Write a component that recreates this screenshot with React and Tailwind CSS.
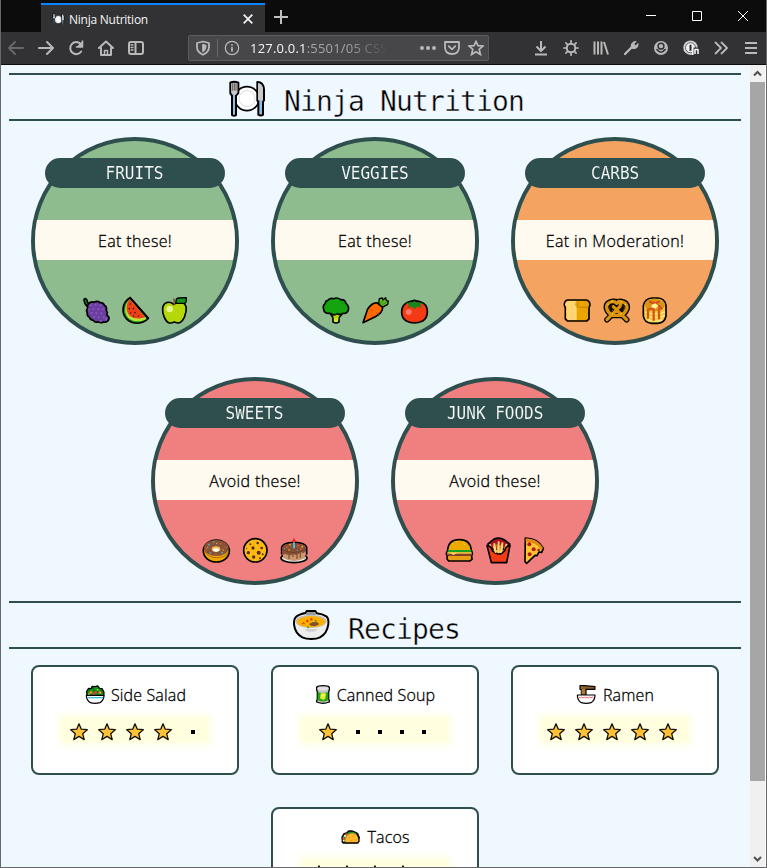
import React from "react";

const ink = { stroke: "#000", strokeWidth: 5, strokeLinejoin: "round", strokeLinecap: "round" };

/* Food drawings: each slot shares one coordinate space, 120 units per column. */
const slots = ["150 495 120 90", "270 495 120 90", "390 495 120 90"];

const dots = (points, fill, r = 2.5) =>
  points.map(([x, y], i) => <circle key={i} cx={x} cy={y} r={r} fill={fill} />);

const food = {
  grapes: (
    <>
      <path {...ink} fill="#16a31a" d="M177 508q6-5 9 3 0 8 8 13l-7 5q-9-7-10-21z" />
      <path {...ink} fill="#6b3fa0" d="M190 522q8-9 17-5 10-6 18 1 10-1 13 8 9 5 6 14 5 8 1 15 8 4 7 12-5 12-17 9-7 5-15-1-10 4-15-4-9 0-12-9-8-4-6-13-5-9 1-14-2-8 2-13z" />
      {dots([[198, 526], [212, 524], [226, 526], [192, 538], [206, 537], [220, 538], [234, 538], [200, 549], [214, 549], [229, 550], [207, 561], [221, 562], [236, 562], [226, 573], [243, 567]], "#8a5abd", 3)}
    </>
  ),
  watermelon: (
    <>
      <path {...ink} fill="#15961a" d="M315 503c-26 15-26 49-9 65 17 16 48 16 64-3z" />
      <path d="M315 508c-19 16-18 43-5 56 14 13 39 13 54 2z" fill="#b9e33c" />
      <path d="M315 508c-15 16-12 37-2 48 11 11 32 12 47 5z" fill="#f03e17" />
      <path {...ink} fill="none" d="M315 503l55 62" />
      {dots([[316, 522], [313, 536], [325, 536], [317, 549], [330, 548], [326, 558], [340, 558]], "#3c1720", 2.4)}
    </>
  ),
  apple: (
    <>
      <path {...ink} fill="#b4d80a" d="M446 523q-9-9-22-5c-15 6-13 29-6 44 8 18 16 20 30 14 15 6 22 3 30-14 8-20 9-39-7-45q-13-4-25 6z" />
      <circle cx="434" cy="537" r="10" fill="#e8f48d" />
      <path stroke="#86562f" strokeWidth="5" d="M449 526q0-12-3-20" />
      <path {...ink} strokeWidth="4" fill="#16961a" d="M453 520q-1-17 8-16l23-1q2 19-9 17z" />
    </>
  ),
  broccoli: (
    <>
      <path {...ink} fill="#b9d80a" d="M197 552l7 11v13q9 5 18 0v-13l9-11z" />
      <path {...ink} fill="#15a310" d="M187 512q8-10 19-6 11-5 21 3 13-1 16 11 10 9 7 20-4 13-17 10-7 6-16 1-10 8-21-1-18 2-20-12-4-11 5-18 0-7 6-8z" />
      <path d="M207 551q15 5 15-6m6-26q9 0 10 5" stroke="#0c8910" strokeWidth="2" fill="none" />
      <path d="M206 561l7 8 8-9-3 16h-10z" fill="#dced27" />
    </>
  ),
  carrot: (
    <>
      <path {...ink} strokeWidth="4" fill="#69bd20" d="M341 522l2-16 9-2 2 6 8-7 2 9 6 1-2 10-12 7-10-1z" />
      <path {...ink} fill="#ff6900" d="M294 578l14-41q15-21 29-18l16 13q0 17-22 28z" />
      <path stroke="#c14f18" strokeWidth="3" d="M316 538l8 7m10 2l7 6m-22 3l6 5" />
      <path stroke="#168b16" strokeWidth="3" d="M345 523l12-13m-5 14l13-8" />
    </>
  ),
  tomato: (
    <>
      <path {...ink} fill="#f33a14" d="M430 516q18-7 38 0c25 8 24 45 5 57q-25 12-49 0c-20-13-19-48 6-57z" />
      <circle cx="431" cy="546" r="9" fill="#ff7765" />
      <path d="M421 519l20-2 3-8 8 0 3 8 20 2-9 5 3 11-11-6-9 9-8-9-11 6 2-11z" fill="#14861b" />
      <path {...ink} strokeWidth="4" fill="none" d="M430 515l12-1 6-4 6 4 12 1" />
    </>
  ),
  bread: (
    <>
      <path {...ink} fill="#eba400" d="M187 510h57q11 3 11 15l-3 8v34l-7 6h-57l-7-6v-34l-3-8q0-12 9-15z" />
      <path d="M188 513h27q-5 5-5 12l5 7v38h-26l-5-5v-34l-4-6q1-10 8-12z" fill="#ffd673" />
      <path stroke="#c67c00" strokeWidth="3" fill="none" d="M216 515q5 4 3 10-2 6-3 8m5-1h30" />
    </>
  ),
  pretzel: (
    <>
      <path fill="none" stroke="#000" strokeWidth="17" strokeLinecap="round" strokeLinejoin="round" d="M306 569l40-39q-2-17-22-16-20 2-20 18 1 14 17 24h28q17-10 18-24-1-16-20-18-20 0-22 15l40 40" />
      <path d="M312 530q2-9 15-9l4 8-13 17q-6-8-6-16zm46 0q-2-9-15-9l-5 8 14 17q6-8 6-16zM335 537l-12 13h24z" fill="#150e00" />
      <path fill="none" stroke="#d9940c" strokeWidth="10" strokeLinecap="round" strokeLinejoin="round" d="M306 569l38-39q8-14-3-16M306 569M335 520q-8-8-18-4-14 5-12 18 2 12 16 22h28q14-10 17-22 1-13-13-18-10-3-18 4M365 569l-40-39" />
      {dots([[309, 523], [321, 515], [349, 515], [361, 523], [322, 552], [348, 552]], "#ffd979", 2)}
    </>
  ),
  pancakes: (
    <>
      <path {...ink} fill="#f6c83b" d="M441 504h18q20 1 24 22v32q-4 21-25 22h-18q-22-2-25-22v-31q5-22 26-23z" />
      <path fill="#dc9217" d="M419 526q3-19 29-20 28 1 32 21-5 15-30 17-27-2-31-18z" />
      <path stroke="#fff08b" strokeWidth="4" fill="none" d="M420 546q28 12 60 0m-58 11q29 12 57 0m-51 12q23 8 44 0" />
      <path stroke="#d55218" strokeWidth="7" strokeLinecap="round" fill="none" d="M429 541v22m17-24v31m16-32v27M435 515q13 9 26 0m-33 25q17-4 28-14 10 2 13 10" />
      <path d="M441 524l10-4 9 7-8 9-13-4z" fill="#fff39b" />
    </>
  ),
  donut: (
    <>
      <ellipse {...ink} cx="214" cy="543" rx="39" ry="33" fill="#f2a600" />
      <ellipse cx="214" cy="534" rx="37" ry="24" fill="#855438" />
      <path d="M179 544q13 20 35 19 26 1 37-18" stroke="#b36d23" strokeWidth="3" fill="none" />
      <ellipse cx="213" cy="537" rx="13" ry="8" fill="#f5bd58" />
      <ellipse cx="213" cy="540" rx="9" ry="5" fill="#fff" />
      {dots([[192, 524], [206, 516], [231, 548], [196, 549]], "#54b9cf")}
      {dots([[227, 521], [184, 538], [241, 532], [213, 553]], "#ef5548")}
      {dots([[215, 520], [188, 532], [234, 540]], "#ffb52e", 2)}
    </>
  ),
  cookie: (
    <>
      <circle {...ink} cx="331" cy="541" r="35" fill="#ffb913" />
      <g fill="#593017">
        <circle cx="324" cy="534" r="5" /><circle cx="310" cy="548" r="5" /><circle cx="341" cy="548" r="6" />
        <circle cx="350" cy="534" r="4" /><circle cx="326" cy="561" r="5" /><circle cx="316" cy="523" r="3" />
        <circle cx="338" cy="519" r="4" /><circle cx="353" cy="553" r="3" /><circle cx="345" cy="565" r="3" />
        <circle cx="305" cy="535" r="2" />
      </g>
    </>
  ),
  cake: (
    <>
      <ellipse {...ink} cx="447" cy="564" rx="39" ry="14" fill="#eee" />
      <path d="M414 534v30q32 18 67 0v-30z" fill="#c9986f" />
      <path {...ink} strokeWidth="5" fill="none" d="M410 552v-20q4-14 37-15 34 1 38 15v20" />
      <path fill="#855034" d="M412 532q4-12 35-13 32 1 36 13v12l-9 6-6-4v17h-4v-13l-6 3v14h-4v-12l-8-2v8h-4v-8l-8 4v10h-4v-12l-9-3-9 2z" />
      <path d="M412 537q34 22 71 0" stroke="#633620" strokeWidth="2" fill="none" />
      <path stroke="#41bce3" strokeWidth="6" d="M447 514v21" />
      <path d="M447 503l6 11-6 5-6-5z" fill="#ed2b19" />
      {dots([[425, 531], [459, 527], [468, 538]], "#ff5446")}
      {dots([[435, 524], [432, 540], [472, 530]], "#ffb21a")}
      {dots([[418, 536], [457, 541]], "#33b8d0", 2)}
    </>
  ),
  burger: (
    <>
      <path {...ink} fill="#e99d14" d="M188 541q2-32 35-32t36 32l3 8-2 9 1 10-7 5h-63l-5-6 1-8-3-8z" />
      <path d="M190 541q3-29 33-29t34 29z" fill="#eda900" />
      <path d="M202 523q6-8 15-9m18 7l5 3" stroke="#ffd04a" strokeWidth="3" />
      <path d="M188 540h71v7h-71z" fill="#16a31d" />
      <path d="M187 547h73v5h-73z" fill="#ffcc48" />
      <path d="M187 551h73v7h-73z" fill="#824225" />
      <path d="M194 548l11 7 13-7z" fill="#ffd663" />
    </>
  ),
  fries: (
    <>
      <path {...ink} fill="#aa121d" d="M309 522l17-14q16-8 31 1l17 13-7 16h-50z" />
      <path stroke="#ffd672" strokeWidth="6" strokeLinecap="round" d="M315 525l9 30m4-33l5 29m8-34l-2 35m13-32l-5 31m17-27l-9 31" />
      <path stroke="#f3a72b" strokeWidth="2" d="M324 524l7 31m4-32l3 28m9-26l-3 25" />
      <path {...ink} fill="#f23a15" d="M306 526l13 52h46l10-52q-13 2-16 16-17 20-37 0-2-14-16-16z" />
      <path stroke="#ffd672" strokeWidth="6" strokeLinecap="round" d="M328 530l4 16m9-18v19m11-18l-4 16" />
    </>
  ),
  pizza: (
    <>
      <path {...ink} fill="#ffc52b" d="M421 504q37 0 54 31l-5 12-8-1-6 11-6-1-25 24-5-5z" />
      <path d="M422 505q36 1 52 29l-5 7q-15-25-47-26z" fill="#e58a16" />
      <g fill="#b91922"><circle cx="433" cy="523" r="6" /><circle cx="446" cy="538" r="6" /><circle cx="434" cy="553" r="6" /><circle cx="461" cy="540" r="4" /></g>
      {dots([[447, 523], [435, 539], [457, 529]], "#ffee75", 2)}
    </>
  ),
};

function Place({ className }) {
  return (
    <svg viewBox="84 39 117 117" className={className}>
      <circle cx="141" cy="98" r="36" fill="#fff" stroke="#000" strokeWidth="5" />
      <circle cx="141" cy="98" r="24" fill="#fff" stroke="#ddd" strokeWidth="3" />
      <path {...ink} strokeWidth="6" fill="#8bbfe5" d="M91 50q11-6 24 0v31l-7 8v58q-5 5-12 0V89l-5-7z" />
      <path fill="#c5c7ca" d="M94 52h18v28l-5 6h-8l-5-6z" />
      <path stroke="#5b4030" strokeWidth="2.5" d="M98 52v22m5-22v22m5-22v22" />
      <path {...ink} strokeWidth="6" fill="#8bbfe5" d="M172 48q18 0 20 22v33l-3 5v38q-6 5-14 0V104h-3z" />
      <path fill="#c8c8cb" d="M174 51q14 2 15 20v32h-15z" />
    </svg>
  );
}

function Soup() {
  return (
    <svg viewBox="66 39 117 105" className="h-[35px] w-[39px] shrink-0">
      <path {...ink} strokeWidth="6" fill="#ededed" d="M107 54l3-6h26l4 7q18 2 29 9 8 7 6 24-4 28-25 39-9 5-26 5t-27-5q-22-12-25-39-1-17 8-24 9-7 27-10z" />
      <path d="M110 51h26l2 9h-30z" fill="#999" />
      <ellipse cx="123" cy="79" rx="47" ry="20" fill="#bfc0c1" />
      <ellipse cx="123" cy="80" rx="42" ry="17" fill="#ffaf00" />
      <path d="M117 87l12-6 13 1 6 6-14 6-12-2z" fill="#81502d" />
      <path d="M94 88l6-7 7 7z" fill="#d9580b" />
      {dots([[124, 73], [112, 78]], "#e22e25", 3.5)}
      {dots([[114, 97], [137, 77]], "#34a321", 3)}
      <path d="M104 102q4 8 10 8h18q8-1 10-8" fill="#d0d0d0" />
    </svg>
  );
}

const dish = {
  salad: (
    <svg viewBox="252 87 66 66" className="h-[22px] w-[22px]">
      <path {...ink} strokeWidth="4" fill="#14961a" d="M261 121l-1-12 6-9 8 1 2-7 9 1 8-2 6 7 7 1 6 11-1 11z" />
      <path stroke="#0b4816" strokeWidth="2" d="M267 105l8 12m4-21l4 16m13-15l-5 18m14-11l-7 14" />
      {dots([[273, 112], [300, 113]], "#ff8b27", 4)}
      {dots([[287, 112], [281, 118]], "#f03c3c", 4)}
      {dots([[293, 104], [267, 118]], "#90db35", 3)}
      <path {...ink} strokeWidth="3.5" fill="#fff" d="M259 121h53q0 15-12 22-15 4-29 0-12-7-12-22z" />
      <path d="M262 126h47v4h-47z" fill="#42bde8" />
    </svg>
  ),
  can: (
    <svg viewBox="165 87 51 66" className="h-[22px] w-[17px]">
      <path {...ink} strokeWidth="4" fill="#bfc1c3" d="M170 97q3-5 19-5t19 5v8l-2 5v22l2 5v4q-19 8-38 0v-4l2-5v-22l-2-5z" />
      <path d="M173 111q16 7 32 0v24q-16 9-32 0z" fill="#28a514" />
      <ellipse cx="189" cy="101" rx="17" ry="6" fill="#e0e0e1" />
      <path d="M182 115h16l-2 16-7 4-9-5z" fill="#d9ee31" /><circle cx="190" cy="121" r="4" fill="#fff269" />
    </svg>
  ),
  ramen: (
    <svg viewBox="231 87 66 66" className="h-[22px] w-[22px]">
      <path {...ink} strokeWidth="3.5" fill="#996633" d="M243 92h14l31 3v8h-27v17h-14v-17h-4z" />
      <path d="M249 95v25m6-24v24" stroke="#d39a4a" strokeWidth="2" />
      <path d="M244 99l43 1" stroke="#5a3818" strokeWidth="2" />
      <path {...ink} strokeWidth="3.5" fill="#fff" d="M235 120h53q0 17-12 23-14 4-29 0-12-7-12-23z" />
      <path d="M240 126l4 3 4-3 4 3 4-3 4 3 4-3 4 3 4-3 4 3 4-3 4 3" fill="none" stroke="#ef4052" strokeWidth="2.5" />
    </svg>
  ),
  taco: (
    <svg viewBox="246 513 66 66" className="h-[22px] w-[22px]">
      <path {...ink} strokeWidth="4" fill="#20942a" d="M253 561l-1-15 6-10 8-2 6-6 11 0 8 3 8 5 5 12-4 8z" />
      {dots([[257, 550], [265, 538]], "#f34646", 3.5)}
      {dots([[257, 557], [261, 543]], "#fff", 3)}
      <path {...ink} strokeWidth="2" stroke="#d98a14" fill="#ffb82e" d="M261 563q0-27 21-28 20 1 21 24l-4 4z" />
      <path {...ink} strokeWidth="4" fill="none" d="M298 538q6 8 5 21l-4 5h-43l-3-4" />
      {dots([[273, 549], [286, 543], [293, 555], [279, 557]], "#e28d16", 2)}
    </svg>
  ),
};

function Title({ icon, children }) {
  return (
    <h1 className="mx-2 flex h-12 items-center justify-center border-y-2 border-[#2f4f4f] pl-[2px]">
      {icon}
      <span className="ml-[17px] mt-[10px] h-[36px] text-[28px] leading-[36px] font-normal tracking-[-0.86px] whitespace-pre text-black [font-family:'DejaVu_Sans_Mono',monospace] [-webkit-text-stroke:0.4px_#f0f8ff]">
        {children}
      </span>
    </h1>
  );
}

function Plate({ name, advice, foods, color }) {
  return (
    <section className={"flex h-52 w-52 flex-col items-center rounded-full border-4 border-[#2f4f4f] " + color}>
      <h2 className="mt-[17px] flex h-[30px] w-[180px] shrink-0 items-center justify-center rounded-full bg-[#2f4f4f] text-white">
        <span className="scale-x-[0.89] text-[18px] leading-[30px] whitespace-pre [font-family:'DejaVu_Sans_Mono',monospace] [-webkit-text-stroke:0.15px_#2f4f4f]">{name}</span>
      </h2>
      <div className="mt-8 h-10 w-full shrink-0 overflow-hidden bg-[#fffaf0] text-center text-[16px] leading-[42px] font-light tracking-[0.36px] text-black [clip-path:ellipse(100px_100px_at_50%_50%)] [-webkit-text-stroke:0.3px_black]">
        {advice}
      </div>
      <div className="mt-[35px] flex">
        {foods.map((f, i) => <svg key={f} viewBox={slots[i]} className="h-[30px] w-10">{food[f]}</svg>)}
      </div>
    </section>
  );
}

function Star() {
  return (
    <svg viewBox="0 0 28 28" className="h-7 w-7 shrink-0">
      <path d="M14 5.8l2.3 5.4 6 .5-4.6 4 1.5 5.9-5.2-3.2-5.2 3.2 1.5-5.9-4.6-4 6-.5z" fill="#ffc236" stroke="#151008" strokeWidth="1.3" strokeLinejoin="round" />
    </svg>
  );
}

function Recipe({ icon, name, stars, trailing }) {
  return (
    <section className="flex h-[110px] w-52 flex-col items-center rounded-lg border-2 border-[#2f4f4f] bg-white">
      <h3 className="mt-[17px] flex h-[22px] items-center gap-[5px] text-[16px] leading-[22px] font-light tracking-[0.15px] whitespace-pre text-black [-webkit-text-stroke:0.3px_black]">
        {dish[icon]}<span>{name}</span>
      </h3>
      <div className={"mt-[12px] flex h-6 w-[146px] items-center justify-center bg-[#ffffe0] pt-[3px] shadow-[0_0_8px_3px_#ffffe0] " + trailing}>
        {Array.from({ length: stars }, (_, i) => <Star key={i} />)}
        <div className={stars < 5 ? "ml-[5px] flex" : "hidden"}>
          {Array.from({ length: 5 - stars }, (_, i) => (
            <span key={i} className="flex h-6 w-[22px] items-center justify-center"><i className="mt-px h-1 w-1 bg-black" /></span>
          ))}
        </div>
      </div>
    </section>
  );
}

function Icon({ children, className = "w-[30px]" }) {
  return (
    <span className={"flex h-8 shrink-0 items-center justify-center " + className}>
      <svg viewBox="0 0 16 16" className="h-4 w-4" fill="none" stroke="#b9b9ba" strokeWidth="2" strokeLinecap="round" strokeLinejoin="round">{children}</svg>
    </span>
  );
}

function TitleBar() {
  return (
    <div className="flex h-8 bg-[#0c0c0d] pt-[3px]">
      <div className="ml-10 flex h-[29px] w-[224px] items-center border-t-2 border-[#0a84ff] bg-[#323234]">
        <Place className="mt-[2px] ml-[11px] h-[13px] w-[13px]" />
        <span className="mt-[2px] ml-[4px] text-[12px] tracking-[-0.25px] text-[#f5f5f6]">Ninja Nutrition</span>
        <svg viewBox="0 0 10 10" className="mr-3 ml-auto h-[10px] w-[10px]" stroke="#eee" strokeWidth="1.8"><path d="M.7.7l8.6 8.6M9.3.7L.7 9.3" /></svg>
      </div>
      <svg viewBox="0 0 14 14" className="mt-[7px] ml-[9px] h-[14px] w-[14px]" stroke="#c1c1c1" strokeWidth="2"><path d="M7 0v14M0 7h14" /></svg>
      <div className="mt-[8px] mr-[18px] ml-auto flex gap-9">
        <svg viewBox="0 0 10 10" className="h-[10px] w-[10px]" stroke="#fff"><path d="M0 4.5h10" /></svg>
        <svg viewBox="0 0 10 10" className="h-[10px] w-[10px]" stroke="#fff" fill="none"><path d="M.5.5h9v9h-9z" /></svg>
        <svg viewBox="0 0 10 10" className="h-[10px] w-[10px]" stroke="#fff"><path d="M0 0l10 10M10 0L0 10" /></svg>
      </div>
    </div>
  );
}

function ToolBar() {
  return (
    <div className="flex h-[33px] border-b border-[#0c0c0d] bg-[#323234]">
      <Icon><path stroke="#68686a" d="M15 8H1m6-6L1 8l6 6" /></Icon>
      <Icon><path d="M1 8h14M9 2l6 6-6 6" /></Icon>
      <Icon><path d="M13.2 11.5A6 6 0 1 1 12.6 4L14 6" /><path d="M14.5 1v6h-6" fill="#b9b9ba" strokeWidth="1.5" /></Icon>
      <Icon><path d="M1 8l7-6.5L15 8M3 8v7h10V8" /><path strokeWidth="1.5" d="M6.5 15v-4.5h3V15" /></Icon>
      <Icon><rect x="1" y="2" width="14" height="12" rx="2" /><path d="M7.5 2v12" /><path strokeWidth="1.3" d="M3 5h2M3 7.5h2M3 10h2" /></Icon>
      <div className="mt-[3px] ml-[37px] flex h-[26px] w-[301px] items-center rounded-xs border border-[#5b5b5d] bg-[#474749]">
        <Icon className="w-7"><path strokeWidth="1.8" d="M8 1.5l6 1.5v4q0 5-6 7.7Q2 12 2 7V3z" /><path fill="#b9b9ba" strokeWidth="1" d="M8 4.5L11 5.3V7q0 3-3 4.7z" /></Icon>
        <i className="h-[18px] w-px bg-[#69696b]" />
        <Icon className="w-7"><circle cx="8" cy="8" r="6.7" strokeWidth="1.2" /><path strokeWidth="1.7" d="M8 7.5V11M8 4.8v.1" /></Icon>
        <span className="ml-[4px] w-[138px] shrink-0 overflow-hidden text-[13px] leading-6 tracking-[0.2px] whitespace-nowrap text-[#f4f4f5] [mask-image:linear-gradient(to_right,black_70%,transparent)]">
          127.0.0.1<span className="text-[#a5a5a7]">:5501/05 CSS</span>
        </span>
        <span className="ml-auto flex">
          <Icon className="w-6"><path fill="#b9b9ba" stroke="none" d="M0 8a2 2 0 1 0 4 0 2 2 0 1 0-4 0m6 0a2 2 0 1 0 4 0 2 2 0 1 0-4 0m6 0a2 2 0 1 0 4 0 2 2 0 1 0-4 0" /></Icon>
          <Icon className="w-6"><path strokeWidth="1.8" d="M1 2h14v5q0 7-7 7T1 7z" /><path strokeWidth="1.8" d="M4.7 6.2L8 9.4l3.3-3.2" /></Icon>
          <Icon className="w-6"><path strokeWidth="1.7" strokeLinejoin="miter" d="M8 1.5l2 4.2 5 .4-3.8 3.3 1.2 5.1L8 11.8l-4.4 2.7 1.2-5.1L1 6.1l5-.4z" /></Icon>
        </span>
      </div>
      <div className="ml-auto flex">
        <Icon><path strokeLinecap="butt" d="M8 1v9.5M3.5 6.5L8 11l4.5-4.5M2 14.5h12" /></Icon>
        <Icon><circle cx="8" cy="8" r="4.3" /><path strokeWidth="1.7" d="M8 .8v2M8 13v2.2M.8 8h2M13 8h2.2M2.9 2.9l1.4 1.4m7.4 7.4l1.4 1.4m0-10.2l-1.4 1.4m-7.4 7.4l-1.4 1.4" /></Icon>
        <Icon><path strokeLinecap="butt" d="M1.5 1.5v13M5 1.5v13M8.5 1.5v13M11 2l4 12.5" /></Icon>
        <Icon><path strokeWidth="2.3" d="M2 14l7-7" /><path fill="#b9b9ba" strokeWidth="1" d="M8.5 8.3q-1.2-4 1.5-6 1.5-1 3-.8l-2 2.3.4 1.5 1.5.4L15 3.5q.4 3.5-1.7 4.5-2 1.2-4 .3z" /></Icon>
        <Icon><circle cx="8" cy="8" r="7" fill="#b9b9ba" stroke="none" /><circle cx="8" cy="6.2" r="2.9" stroke="#323234" strokeWidth="1.5" /><path stroke="#323234" strokeWidth="1.5" d="M3.8 9.5Q8 14.8 12.2 9.5" /></Icon>
        <Icon><circle cx="7.5" cy="7.7" r="7.2" fill="#d0d0d0" stroke="none" /><circle cx="7.5" cy="7.7" r="5" fill="#f2f2f2" stroke="#68686a" strokeWidth="1" /><path stroke="#29292b" strokeLinecap="butt" d="M7.5 4.8v6" /><path d="M9.5 7.5h6.5V16h-6.5z" fill="#323234" stroke="none" /><path stroke="#fff" strokeWidth="1.5" strokeLinecap="butt" d="M9.8 7v8m2.2-1V9.5h3V14" /></Icon>
        <Icon><path strokeWidth="1.8" d="M2.5 2.5L8 8l-5.5 5.5M8.5 2.5L14 8l-5.5 5.5" /></Icon>
        <Icon><path strokeLinecap="butt" d="M2 3h12M2 8h12M2 13h12" /></Icon>
      </div>
    </div>
  );
}

export default function App() {
  return (
    <div className="relative flex h-[868px] w-[767px] flex-col overflow-hidden border-x border-b border-[#68686a] bg-[#f0f8ff] [font-family:'Open_Sans','Noto_Sans',sans-serif]">
      <TitleBar />
      <ToolBar />
      <div className="flex min-h-0 flex-1">
        <main className="w-[748px] shrink-0 overflow-hidden pt-2">
          <Title icon={<Place className="mt-[3px] h-[39px] w-[39px] shrink-0" />}>Ninja Nutrition</Title>
          <div className="mt-4 flex flex-wrap justify-center gap-8">
            <Plate name="FRUITS" advice="Eat these!" color="bg-[#8fbc8f]" foods={["grapes", "watermelon", "apple"]} />
            <Plate name="VEGGIES" advice="Eat these!" color="bg-[#8fbc8f]" foods={["broccoli", "carrot", "tomato"]} />
            <Plate name="CARBS" advice="Eat in Moderation!" color="bg-[#f4a460]" foods={["bread", "pretzel", "pancakes"]} />
            <Plate name="SWEETS" advice="Avoid these!" color="bg-[#f08080]" foods={["donut", "cookie", "cake"]} />
            <Plate name="JUNK FOODS" advice="Avoid these!" color="bg-[#f08080]" foods={["burger", "fries", "pizza"]} />
          </div>
          <div className="mt-4"><Title icon={<Soup />}>Recipes</Title></div>
          <div className="mt-4 flex flex-wrap justify-center gap-8">
            <Recipe icon="salad" name="Side Salad" stars={4} trailing="pr-px" />
            <Recipe icon="can" name="Canned Soup" stars={1} trailing="pr-[2px]" />
            <Recipe icon="ramen" name="Ramen" stars={5} trailing="pr-[6px]" />
            <Recipe icon="taco" name="Tacos" stars={4} trailing="pr-px" />
          </div>
        </main>
        <aside className="ml-px flex w-4 flex-col items-center border-r border-white bg-[#f0f0f0]">
          <svg viewBox="0 0 15 17" className="h-[17px] w-[15px] shrink-0" fill="none" stroke="#505050" strokeWidth="2"><path d="M4 10.5L7.5 7l3.5 3.5" /></svg>
          <div className="h-[699px] w-[15px] shrink-0 bg-[#a6a6a6]" />
          <svg viewBox="0 0 15 17" className="mt-auto h-[17px] w-[15px] shrink-0" fill="none" stroke="#505050" strokeWidth="2"><path d="M4 7l3.5 3.5L11 7" /></svg>
        </aside>
      </div>
    </div>
  );
}
